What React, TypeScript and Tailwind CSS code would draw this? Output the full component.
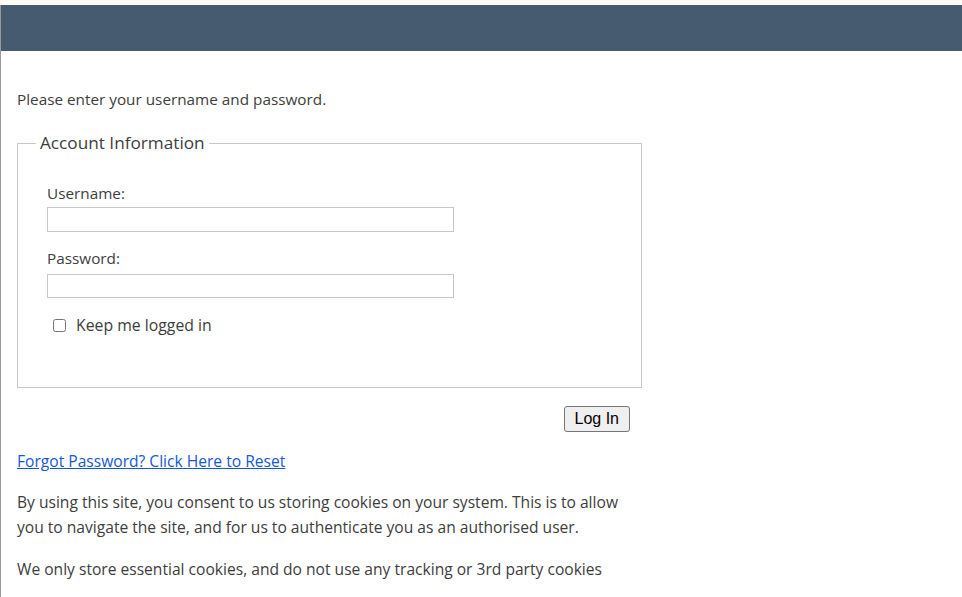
export default function App() {
  const font = { fontFamily: '"Open Sans", "Noto Sans", sans-serif' };
  return (
    <div className="min-h-[597px] bg-[#fdfbf7] pt-[5px]" style={font}>
      <div className="min-h-[592px] border-l border-[#9a9a9a] bg-white">
        <div className="h-[46px] bg-[#465b6f]" />
        <div className="w-[641px] pl-[16px] pt-[38px] text-[15.3px] leading-[20px] text-[#3d3d3d]">
          <p>Please enter your username and password.</p>

          <fieldset className="mt-[22px] h-[257px] border border-[#c8c8c8] pl-[29px] pr-[20px] pt-[28px]">
            <legend className="ml-[-11px] px-[4px] text-[17.2px] leading-[24px] text-[#3d3d3d]">Account Information</legend>
            <label className="block">Username:</label>
            <input type="text" className="mt-[4px] block h-[25px] w-[407px] border border-[#c8c8c8] bg-white" />
            <label className="mt-[16px] block">Password:</label>
            <input type="password" className="mt-[6px] block h-[24px] w-[407px] border border-[#c8c8c8] bg-white" />
            <div className="mt-[17px] flex items-center gap-[10px] pl-[6px]">
              <input type="checkbox" className="m-0 h-[13px] w-[13px]" />
              <span className="text-[15.8px]">Keep me logged in</span>
            </div>
          </fieldset>

          <div className="mt-[18px] flex justify-end pr-[12px]">
            <button
              className="h-[26px] rounded-[3px] border border-[#767676] bg-[#efefef] px-[10px] text-[16px] text-black"
              style={{ fontFamily: '"Liberation Sans", Arial, sans-serif' }}
            >
              Log In
            </button>
          </div>

          <a href="#" className="mt-[19px] block w-fit text-[15.6px] text-[#1558d6] underline">
            Forgot Password? Click Here to Reset
          </a>

          <p className="mt-[19px] w-[615px] text-[15.6px] leading-[25px]">
            By using this site, you consent to us storing cookies on your system. This is to allow you to navigate the site, and for us to authenticate you as an authorised user.
          </p>
          <p className="mt-[17px] text-[15.6px] leading-[25px]">
            We only store essential cookies, and do not use any tracking or 3rd party cookies
          </p>
        </div>
      </div>
    </div>
  );
}
